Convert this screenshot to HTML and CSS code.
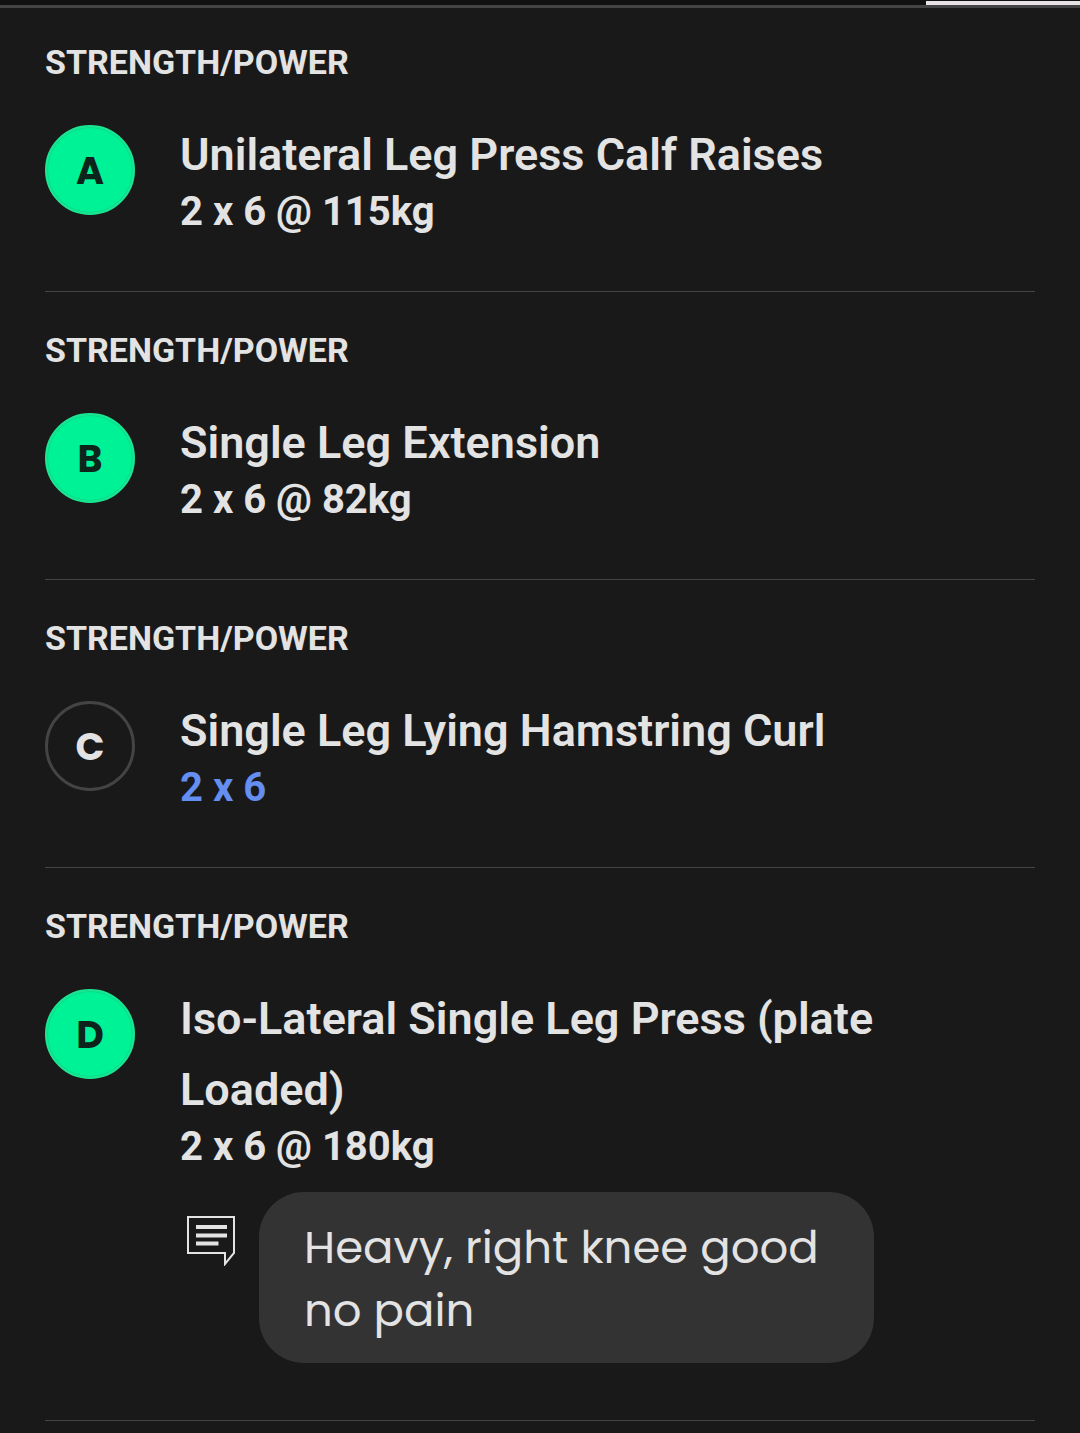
FILE: index.html
```html
<!DOCTYPE html>
<html lang="en">
<head>
<meta charset="utf-8">
<meta name="viewport" content="width=device-width, initial-scale=1">
<title>Workout</title>
<link rel="stylesheet" href="styles.css">
</head>
<body>
<div class="tabs"><div class="tabs-indicator"></div></div>
<main class="blocks">
  <section class="block">
    <h2 class="category">STRENGTH/POWER</h2>
    <div class="exercise">
      <span class="badge badge-done">A</span>
      <div class="details">
        <h3 class="name">Unilateral Leg Press Calf Raises</h3>
        <p class="sets">2 x 6 @ 115kg</p>
      </div>
    </div>
  </section>
  <section class="block">
    <h2 class="category">STRENGTH/POWER</h2>
    <div class="exercise">
      <span class="badge badge-done">B</span>
      <div class="details">
        <h3 class="name">Single Leg Extension</h3>
        <p class="sets">2 x 6 @ 82kg</p>
      </div>
    </div>
  </section>
  <section class="block">
    <h2 class="category">STRENGTH/POWER</h2>
    <div class="exercise">
      <span class="badge">C</span>
      <div class="details">
        <h3 class="name">Single Leg Lying Hamstring Curl</h3>
        <p class="sets sets-planned">2 x 6</p>
      </div>
    </div>
  </section>
  <section class="block">
    <h2 class="category">STRENGTH/POWER</h2>
    <div class="exercise">
      <span class="badge badge-done">D</span>
      <div class="details">
        <h3 class="name">Iso-Lateral Single Leg Press (plate Loaded)</h3>
        <p class="sets">2 x 6 @ 180kg</p>
        <div class="note">
          <svg class="note-icon" width="50" height="50" viewBox="0 0 50 50" fill="none" stroke="currentColor" aria-hidden="true">
            <path d="M2 1H48V37L39 48V37H2Z" stroke-width="2"/>
            <path d="M10 11H41M10 19.5H41M10 27.500H32.500" stroke-width="4"/>
          </svg>
          <p class="note-text">Heavy, right knee good no pain</p>
        </div>
      </div>
    </div>
  </section>
</main>
</body>
</html>
```
FILE: styles.css
```css
* {
  box-sizing: border-box;
  margin: 0;
}

body {
  min-height: 100vh;
  background: #191919;
  color: #e3e3e3;
  font-family: Roboto, "Liberation Sans", sans-serif;
}

.tabs {
  display: flex;
  justify-content: flex-end;
  height: 8px;
  padding-top: 1px;
  background: #111;
  border-bottom: 3px solid #444;
}

.tabs-indicator {
  width: 14.3%;
  height: 4px;
  background: #e6e2e6;
}

.blocks {
  padding: 0 45px;
}

.block {
  padding: 32px 0 57px;
  border-bottom: 1px solid #444;
}

.block:first-child {
  padding-top: 28px;
}

.category {
  margin-bottom: 31px;
  font-size: 34px;
  font-weight: 700;
  line-height: 52px;
}

.exercise {
  display: flex;
  align-items: flex-start;
  gap: 45px;
}

.badge {
  display: flex;
  flex: none;
  align-items: center;
  justify-content: center;
  width: 90px;
  height: 90px;
  margin-top: 6px;
  border: 3px solid #444;
  border-radius: 50%;
  font-family: Poppins, Inter, "Liberation Sans", sans-serif;
  font-size: 38px;
  font-weight: 700;
}

.badge-done {
  border: 2px solid #1be591;
  background: #00f297;
  box-shadow: inset 0 0 0 1px #0cda8b;
  color: #0c2419;
}

.details {
  flex: 1;
  padding-right: 161px;
}

.name {
  font-size: 45px;
  font-weight: 600;
  line-height: 71px;
}

.sets {
  font-size: 40px;
  font-weight: 700;
  line-height: 44px;
}

.sets-planned {
  color: #648ef0;
}

.note {
  display: flex;
  align-items: flex-start;
  gap: 23px;
  margin-top: 23px;
  padding-left: 6px;
}

.note-icon {
  flex: none;
  margin-top: 24px;
}

.note-text {
  flex: 1;
  padding: 24px 45px 21px;
  border-radius: 45px;
  background: #333;
  font-family: Poppins, Inter, "Liberation Sans", sans-serif;
  font-size: 45px;
  line-height: 63px;
}
```
